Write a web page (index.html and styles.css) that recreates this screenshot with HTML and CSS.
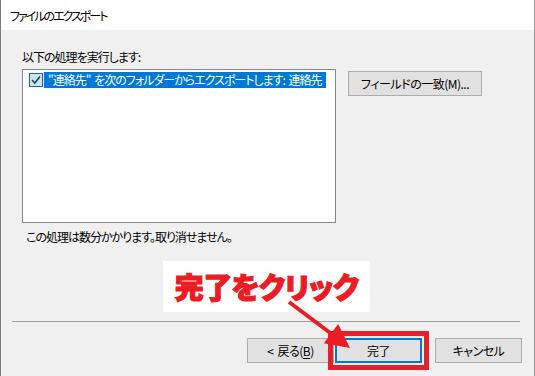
FILE: index.html
```html
<!DOCTYPE html>
<html lang="ja">
<head>
  <meta charset="UTF-8">
  <meta name="viewport" content="width=device-width, initial-scale=1.0">
  <title>ファイルのエクスポート</title>
  <link rel="stylesheet" href="styles.css">
</head>
<body>

<div class="window">
  <div class="titlebar">ファイルのエクスポート</div>

  <div class="content">
    <p class="label">以下の処理を実行します:</p>

    <div class="task-row">
      <div class="listbox">
        <div class="item">
          <span class="check">
            <svg width="14" height="14" viewBox="0 0 14 14">
              <rect x="0.5" y="0.5" width="13" height="13" fill="#cce4f7" stroke="#1c5e9c"/>
              <polyline points="3,7 5.8,10 11,3.5" fill="none" stroke="#1a3f6b" stroke-width="1.6"/>
            </svg>
          </span>
          <span class="item-text">"連絡先" を次のフォルダーからエクスポートします: 連絡先</span>
        </div>
      </div>
      <button class="btn btn-map">フィールドの一致(M)...</button>
    </div>

    <p class="note">この処理は数分かかります。取り消せません。</p>

    <hr class="sep">

    <div class="actions">
      <button class="btn">&lt; 戻る(<u>B</u>)</button>
      <button class="btn btn-default marked">完了</button>
      <button class="btn btn-cancel">キャンセル</button>
    </div>
  </div>

  <!-- annotation on top of the dialog -->
  <div class="callout">完了をクリック</div>
  <svg class="arrow" width="535" height="376" viewBox="0 0 535 376">
    <line x1="288" y1="302" x2="332" y2="335" stroke="#ec1c24" stroke-width="4"/>
    <polygon points="349,348 322.8,343.2 337.2,324" fill="#ec1c24"/>
  </svg>
</div>

</body>
</html>
```

FILE: styles.css
```css
* {
  box-sizing: border-box;
}
body {
  margin: 0;
  background-color: #f0f0f0;
  font-family: "Noto Sans CJK JP", "Noto Sans", sans-serif;
  font-feature-settings: "palt";
  font-size: 12px;
  letter-spacing: -1px;
  word-spacing: 2px;
  color: #000;
}
.window {
  position: relative;
  width: 535px;
  height: 376px;
  display: flex;
  flex-direction: column;
  background-color: #f0f0f0;
  border-left: 1px solid #7a7a7a;
  border-right: 1px solid #9a9a9a;
  overflow: hidden;
}
.titlebar {
  height: 30px;
  background: white;
  padding: 2px 0 0 9px;
  line-height: 28px;
  letter-spacing: -2px;
}
.content {
  flex: 1;
  display: flex;
  flex-direction: column;
  padding: 0 12px 13px 11px;
}
.label {
  margin: 19px 0 0 10px;
  line-height: 16px;
}
.task-row {
  display: flex;
  align-items: flex-start;
  margin: 4px 0 0 10px;
}
.listbox {
  width: 314px;
  height: 154px;
  background: white;
  border: 1px solid #828790;
  padding: 2px 0 0 6px;
}
.item {
  display: flex;
  align-items: center;
  height: 16px;
}
.check {
  display: flex;
  width: 14px;
  height: 14px;
}
.item-text {
  background-color: #0078d7;
  color: white;
  height: 16px;
  line-height: 16px;
  padding: 0 4px 0 4px;
  margin-left: 1px;
  white-space: nowrap;
}
.btn {
  height: 25px;
  width: 87px;
  padding: 0;
  background-color: #e1e1e1;
  border: 1px solid #adadad;
  font-family: inherit;
  font-feature-settings: "palt";
  font-size: 12px;
  letter-spacing: -0.5px;
  word-spacing: 2px;
  color: #000;
}
.btn u {
  text-decoration-thickness: 1px;
  text-underline-offset: 2px;
}
.btn-map {
  width: 134px;
  margin: 2px 0 0 12px;
}
.note {
  margin: 6px 0 0 14px;
  line-height: 16px;
}
.sep {
  margin: auto 2px 0 0;
  border: none;
  border-top: 1px solid #a0a0a0;
  height: 0;
}
.actions {
  display: flex;
  justify-content: flex-end;
  margin-top: 16px;
}
.btn-default {
  border: 2px solid #0078d7;
  margin-left: 1px;
}
.btn-cancel {
  margin-left: 13px;
}
.marked {
  outline: 5px solid #e4202a;
  outline-offset: 2px;
}
.callout {
  position: absolute;
  left: 162px;
  top: 261px;
  width: 207px;
  height: 51px;
  background: white;
  color: #ec1c24;
  font-size: 29px;
  font-weight: 900;
  -webkit-text-stroke: 1.2px #ec1c24;
  line-height: 51px;
  text-align: center;
  letter-spacing: -0.5px;
}
.arrow {
  position: absolute;
  left: 0;
  top: 0;
  pointer-events: none;
}
```
